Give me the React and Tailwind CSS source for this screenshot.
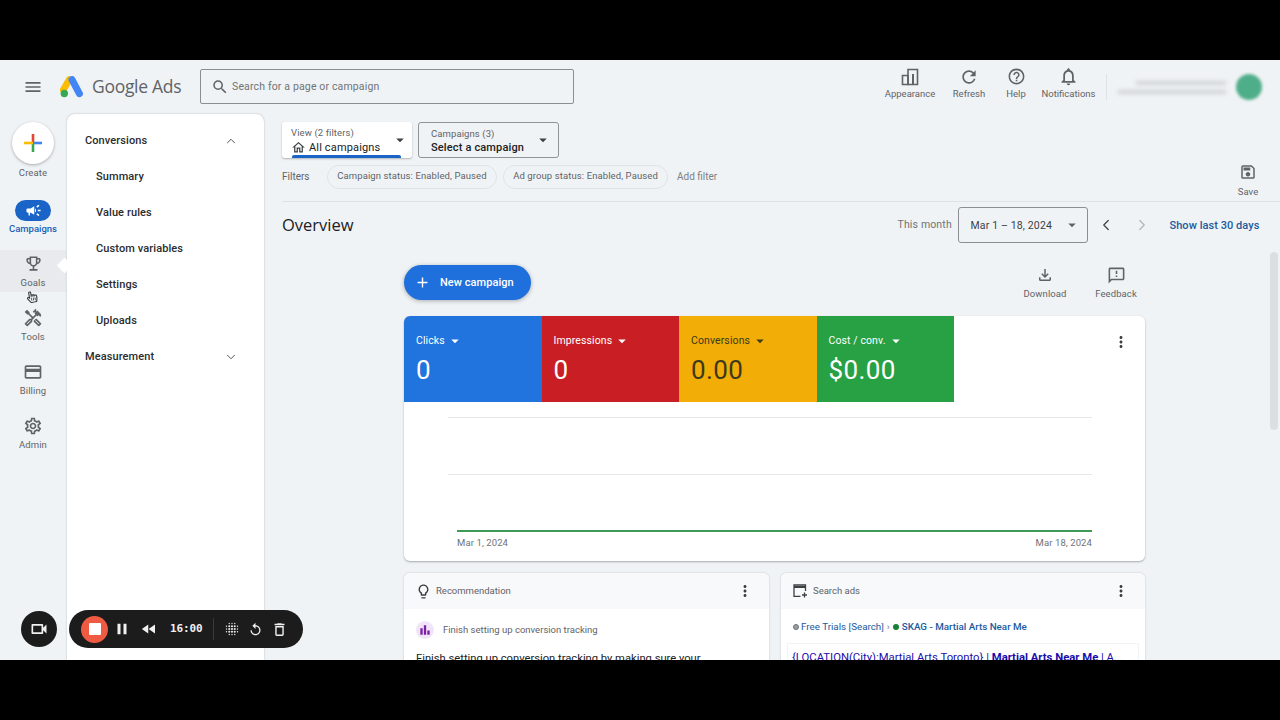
import React from "react";
import {
  MdMenu, MdSearch, MdRefresh, MdHelpOutline, MdNotificationsNone, MdCampaign, MdOutlineEmojiEvents,
  MdOutlineHandyman, MdOutlineCreditCard, MdOutlineSettings, MdArrowDropDown,
  MdOutlineHome, MdOutlineSave, MdAdd, MdOutlineFileDownload, MdOutlineSmsFailed,
  MdMoreVert, MdOutlineLightbulb, MdBarChart, MdOutlineVideocam, MdPause, MdFastRewind, MdReplay, MdOutlineDelete,
} from "react-icons/md";
import { FaRegHandPointer } from "react-icons/fa";
import { ChevronLeft, ChevronRight, ChevronUp, ChevronDown } from "lucide-react";

const AdsLogo = () => (
  <svg width="24" height="22" viewBox="0 0 24 22">
    <path d="M9.300 3.500 L3.200 14" stroke="#fbbc04" strokeWidth="6.600" strokeLinecap="round" />
    <path d="M12 3.600 L19.400 17.600" stroke="#4285f4" strokeWidth="7" strokeLinecap="round" />
    <circle cx="4.300" cy="17.500" r="3.700" fill="#34a853" />
  </svg>
);

const AppearanceIcon = () => (
  <svg width="18" height="18" viewBox="0 0 18 18" fill="none" stroke="#5f6368" strokeWidth="1.600">
    <path d="M1.500 7.500h5.500v9H1.500z" />
    <path d="M7 1.500h9.500v15H7z" />
    <path d="M11 6h2v10.500h-2z" fill="#5f6368" stroke="none" />
  </svg>
);

const ColorPlus = () => (
  <svg width="18" height="18" viewBox="0 0 18 18">
    <path d="M7.700 0h2.600v9H7.700z" fill="#ea4335" />
    <path d="M9 7.700h9v2.600H9z" fill="#4285f4" />
    <path d="M7.700 9h2.600v9H7.700z" fill="#34a853" />
    <path d="M0 7.700h9v2.600H0z" fill="#fbbc04" />
  </svg>
);

const AddWindow = () => (
  <svg width="15" height="14" viewBox="0 0 15 14" fill="none" stroke="#3c4043" strokeWidth="1.300">
    <path d="M7.500 12.400H1V1h11.500v6" />
    <path d="M1 3h11.500" strokeWidth="2" />
    <path d="M11.500 8.500v5M9 11h5" />
  </svg>
);

const GridDots = () => (
  <svg width="14" height="14" viewBox="0 0 14 14" fill="#e8e8e8">
    {[0, 1, 2, 3, 4].flatMap((r) =>
      [0, 1, 2, 3, 4].map((c) => {
        const big = c >= 1 && c <= 3 && r >= 1 && r <= 3;
        const corner = (r === 0 || r === 4) && (c === 0 || c === 4);
        if (corner) return null;
        return <circle key={`${r}-${c}`} cx={1.5 + c * 2.75} cy={1.5 + r * 2.75} r={big ? 1.05 : 0.7} />;
      })
    )}
  </svg>
);

const RailItem = ({ icon, label }) => (
  <div className="h-[54px] w-full flex flex-col items-center pt-[4px]">
    {icon}
    <span className="text-[9.500px] leading-[12px] tracking-[0.1px] text-[#5f6368] mt-[3px]">{label}</span>
  </div>
);

const HeaderAction = ({ icon, label, className }) => (
  <div className={`flex flex-col items-center ${className}`}>
    <div className="h-[20px] flex items-center justify-center">{icon}</div>
    <span className="text-[9.500px] leading-[12px] tracking-[0px] text-[#5f6368] mt-[1px] whitespace-nowrap">{label}</span>
  </div>
);

const Tile = ({ label, value, bg, dark }) => (
  <div className={`w-[137.5px] h-[86px] ${bg} pl-[12px] pt-[17px] ${dark ? "text-[#3c3a1e]" : "text-white"}`}>
    <div className="flex items-center h-[16px]">
      <span className="text-[10.500px] tracking-[0.1px]">{label}</span>
      <MdArrowDropDown size={18} className="ml-[1px]" />
    </div>
    <div className="text-[26px] leading-[28px] mt-[7px] tracking-[0.4px]">{value}</div>
  </div>
);

const Chip = ({ children, className }) => (
  <span className={`h-[24px] flex items-center justify-center rounded-full border border-[#e0e3e6] text-[9.500px] text-[#5f6368] tracking-[0.1px] whitespace-nowrap ${className}`}>{children}</span>
);

export default function App() {
  return (
    <div className="w-[1280px] h-[720px] bg-black py-[60px] overflow-hidden" style={{ fontFamily: "Roboto, 'Liberation Sans', sans-serif" }}>
      <div className="relative h-[600px] bg-[#f0f3f5] overflow-hidden flex flex-col">
        {/* Header */}
        <header className="h-[54px] shrink-0 flex items-center">
          <div className="w-[66px] flex justify-center"><MdMenu size={20} className="text-[#5f6368]" /></div>
          <div className="ml-[-6px] mt-[-1px]"><AdsLogo /></div>
          <span className="ml-[8px] text-[17.500px] text-[#5f6368] w-[108px] mt-[-1px]" style={{ fontFamily: "'Open Sans', sans-serif", letterSpacing: "-0.3px" }}>Google Ads</span>
          <div className="w-[374px] h-[35px] mt-[-1px] border border-[#8a8f94] rounded-[2px] flex items-center pl-[10px]">
            <MdSearch size={18} className="text-[#5f6368]" />
            <span className="ml-[3px] text-[10.500px] tracking-[0.15px] text-[#6f7377]">Search for a page or campaign</span>
          </div>
          <div className="flex items-start ml-[311px] mt-[-8px]">
            <HeaderAction className="w-[50px]" icon={<AppearanceIcon />} label="Appearance" />
            <HeaderAction className="w-[26px] ml-[21px]" icon={<MdRefresh size={20} className="text-[#5f6368]" />} label="Refresh" />
            <HeaderAction className="w-[20px] ml-[24px]" icon={<MdHelpOutline size={19} className="text-[#5f6368]" />} label="Help" />
            <HeaderAction className="w-[55px] ml-[15px]" icon={<MdNotificationsNone size={21} className="text-[#5f6368]" />} label="Notifications" />
          </div>
          <div className="ml-[10px] w-px h-[26px] bg-[#e0e3e6]" />
          <div className="ml-[9px] w-[110px] flex flex-col items-end gap-[5px] blur-[2px]">
            <div className="w-[90px] h-[4px] bg-[#cfd2d4]" />
            <div className="w-[108px] h-[4px] bg-[#cfd2d4]" />
          </div>
          <div className="ml-[10px] w-[26px] h-[26px] rounded-full bg-[#4fae8a] blur-[1.500px]" />
        </header>

        <div className="flex-1 flex min-h-0">
          {/* Rail */}
          <nav className="w-[66px] shrink-0 flex flex-col items-center pt-[8px]">
            <div className="h-[74px] flex flex-col items-center w-full">
              <div className="w-[42px] h-[42px] shrink-0 rounded-full bg-white shadow-[0_1px_3px_rgba(60,64,67,0.4)] flex items-center justify-center"><ColorPlus /></div>
              <span className="text-[9.500px] leading-[12px] tracking-[0.1px] text-[#5f6368] mt-[3px]">Create</span>
            </div>
            <div className="h-[54px] w-full flex flex-col items-center pt-[4px]">
              <div className="w-[36px] h-[21px] rounded-full bg-[#1a63c7] flex items-center justify-center"><MdCampaign size={17} className="text-white" /></div>
              <span className="text-[9.500px] leading-[12px] tracking-[0px] text-[#1a5fb4] font-medium mt-[2px]">Campaigns</span>
            </div>
            <div className="h-[42px] w-full bg-[#e8eaed] flex flex-col items-center pt-[4px] mb-[12px]">
              <MdOutlineEmojiEvents size={19} className="text-[#5f6368]" />
              <span className="text-[9.500px] leading-[12px] tracking-[0.1px] text-[#5f6368] mt-[4px]">Goals</span>
            </div>
            <RailItem icon={<MdOutlineHandyman size={20} className="text-[#5f6368]" />} label="Tools" />
            <RailItem icon={<MdOutlineCreditCard size={20} className="text-[#5f6368]" />} label="Billing" />
            <RailItem icon={<MdOutlineSettings size={20} className="text-[#5f6368]" />} label="Admin" />
          </nav>

          {/* Sub menu */}
          <aside className="ml-[1px] w-[197px] shrink-0 bg-white rounded-t-[8px] shadow-[0_0_2px_rgba(60,64,67,0.35)] pt-[9px] text-[11px] tracking-[0.1px] font-medium text-[#2a2c2f]">
            <div className="h-[36px] flex items-center justify-between pl-[18px] pr-[26px]"><span>Conversions</span><ChevronUp size={14} strokeWidth={1.5} className="text-[#3c4043]" /></div>
            {["Summary", "Value rules", "Custom variables", "Settings", "Uploads"].map((t) => (
              <div key={t} className="h-[36px] flex items-center pl-[29px]">{t}</div>
            ))}
            <div className="h-[36px] flex items-center justify-between pl-[18px] pr-[26px]"><span>Measurement</span><ChevronDown size={14} strokeWidth={1.5} className="text-[#3c4043]" /></div>
          </aside>

          {/* Main */}
          <main className="flex-1 min-w-0 pl-[18px]">
            <div className="flex gap-[6px] pt-[8px]">
              <div className="relative w-[130px] h-[36px] bg-white rounded-[3px] shadow-[0_1px_2px_rgba(60,64,67,0.35)] pl-[9px] pt-[5px] overflow-hidden">
                <div className="text-[9.500px] leading-[11px] text-[#5f6368] tracking-[0.1px]">View (2 filters)</div>
                <div className="flex items-center mt-[2px]">
                  <MdOutlineHome size={15} className="text-[#3c4043]" />
                  <span className="ml-[3px] text-[11px] leading-[14px] tracking-[0.15px] text-[#202124]">All campaigns</span>
                </div>
                <MdArrowDropDown size={18} className="absolute right-[3px] top-[9px] text-[#3c4043]" />
                <div className="absolute left-[10px] bottom-0 w-[109px] h-[3px] bg-[#1a63c7] rounded-t-[2px]" />
              </div>
              <div className="relative w-[141px] h-[36px] border border-[#8f9498] rounded-[3px] pl-[12px] pt-[5px]">
                <div className="text-[9.500px] leading-[11px] text-[#5f6368] tracking-[0.1px]">Campaigns (3)</div>
                <div className="text-[11px] leading-[14px] mt-[2px] tracking-[0.15px] font-medium text-[#202124]">Select a campaign</div>
                <MdArrowDropDown size={18} className="absolute right-[6px] top-[8px] text-[#3c4043]" />
              </div>
            </div>

            <div className="relative flex items-center h-[44px] border-b border-[#dfe2e5]">
              <div className="flex items-center mt-[-6px]">
                <span className="text-[10px] text-[#5f6368] w-[45px]">Filters</span>
                <Chip className="w-[170px]">Campaign status: Enabled, Paused</Chip>
                <Chip className="w-[165px] ml-[6px]">Ad group status: Enabled, Paused</Chip>
                <span className="ml-[9px] text-[10px] text-[#7d8185]">Add filter</span>
              </div>
              <div className="absolute left-[953px] top-[5px] flex flex-col items-center w-[26px]">
                <MdOutlineSave size={18} className="text-[#5f6368]" />
                <span className="text-[9.500px] leading-[12px] mt-[5px] tracking-[0.1px] text-[#5f6368]">Save</span>
              </div>
            </div>

            <div className="flex items-center h-[36px] mt-[5px]">
              <span className="text-[16.500px] text-[#202124] w-[615.500px]" style={{ fontFamily: "'Open Sans', sans-serif" }}>Overview</span>
              <span className="text-[10.500px] text-[#6f7377] tracking-[0.15px] w-[60px]">This month</span>
              <div className="w-[130px] h-[36px] border border-[#8a8f94] rounded-[3px] flex items-center justify-between pl-[12px] pr-[6px]">
                <span className="mt-[1px] text-[10.500px] tracking-[0.15px] text-[#3c4043]">Mar 1 – 18, 2024</span>
                <MdArrowDropDown size={18} className="text-[#5f6368]" />
              </div>
              <ChevronLeft size={18} strokeWidth={1.6} className="text-[#3c4043] ml-[9px]" />
              <ChevronRight size={18} strokeWidth={1.6} className="text-[#b0b3b7] ml-[18px]" />
              <span className="ml-[19px] mt-[2px] text-[11px] font-medium text-[#1c5a9f] tracking-[0.05px] whitespace-nowrap">Show last 30 days</span>
            </div>

            <div className="ml-[122px] w-[741px]">
              <div className="flex items-start justify-between h-[73px] pt-[22px]">
                <div className="w-[127px] h-[35px] rounded-full bg-[#1f6fdc] shadow-[0_1px_4px_rgba(60,64,67,0.4)] flex items-center pl-[10px] text-white">
                  <MdAdd size={17} />
                  <span className="ml-[9px] mt-[1px] text-[11px] font-medium tracking-[0.05px]">New campaign</span>
                </div>
                <div className="flex items-start mt-[1px]">
                  <div className="flex flex-col items-center w-[44px]">
                    <MdOutlineFileDownload size={18} className="text-[#5f6368]" />
                    <span className="text-[9.500px] leading-[12px] tracking-[0.1px] text-[#5f6368] mt-[4px]">Download</span>
                  </div>
                  <div className="flex flex-col items-center w-[44px] ml-[27px] mr-[7px]">
                    <MdOutlineSmsFailed size={19} className="text-[#5f6368]" />
                    <span className="text-[9.500px] leading-[12px] tracking-[0.1px] text-[#5f6368] mt-[3px]">Feedback</span>
                  </div>
                </div>
              </div>

              <section className="relative h-[245px] bg-white rounded-[6px] overflow-hidden shadow-[0_1px_2px_rgba(60,64,67,0.4)]">
                <div className="flex">
                  <Tile label="Clicks" value="0" bg="bg-[#2173de]" />
                  <Tile label="Impressions" value="0" bg="bg-[#c91f24]" />
                  <Tile label="Conversions" value="0.00" bg="bg-[#f2ad06]" dark />
                  <Tile label="Cost / conv." value="$0.00" bg="bg-[#28a144]" />
                </div>
                <MdMoreVert size={18} className="absolute right-[15px] top-[17px] text-[#3c4043]" />
                <div className="ml-[44px] w-[644px] pt-[15px]">
                  <div className="h-[57px] border-t border-[#e6e8ea]" />
                  <div className="h-[56px] border-t border-[#e6e8ea]" />
                  <div className="ml-[9px] h-[2px] bg-[#3f9a55]" />
                  <div className="ml-[9px] mt-[4px] flex justify-between text-[9.500px] tracking-[0.1px] text-[#6f7377]">
                    <span>Mar 1, 2024</span><span>Mar 18, 2024</span>
                  </div>
                </div>
              </section>

              <div className="flex gap-[12px] mt-[12px]">
                <section className="w-[365px] h-[120px] bg-white rounded-t-[6px] shadow-[0_0_2px_rgba(60,64,67,0.3)] overflow-hidden">
                  <div className="h-[36px] bg-[#f8f9fa] flex items-center pl-[11px] pr-[15px]">
                    <MdOutlineLightbulb size={17} className="text-[#3c4043]" />
                    <span className="ml-[4px] text-[9.500px] tracking-[0px] text-[#5f6368]">Recommendation</span>
                    <MdMoreVert size={18} className="ml-auto text-[#3c4043]" />
                  </div>
                  <div className="flex items-center pl-[12px] mt-[12px]">
                    <div className="w-[18px] h-[18px] rounded-full bg-[#f1e4f8] flex items-center justify-center"><MdBarChart size={14} className="text-[#7b1fa2]" /></div>
                    <span className="ml-[9px] text-[9.500px] tracking-[0px] text-[#5f6368]">Finish setting up conversion tracking</span>
                  </div>
                  <div className="pl-[12px] mt-[12px] text-[11.200px] text-[#202124] whitespace-nowrap">Finish setting up conversion tracking by making sure your</div>
                </section>
                <section className="w-[364px] h-[120px] bg-white rounded-t-[6px] shadow-[0_0_2px_rgba(60,64,67,0.3)] overflow-hidden">
                  <div className="h-[36px] bg-[#f8f9fa] flex items-center pl-[12px] pr-[15px]">
                    <AddWindow />
                    <span className="ml-[5px] text-[9.500px] tracking-[0px] text-[#5f6368]">Search ads</span>
                    <MdMoreVert size={18} className="ml-auto text-[#3c4043]" />
                  </div>
                  <div className="flex items-center pl-[12px] mt-[11px] text-[9.800px] text-[#1c5a9f] whitespace-nowrap">
                    <span className="w-[6px] h-[6px] rounded-full border-[1.500px] border-[#6f7377] bg-[#9a9ea2]" />
                    <span className="ml-[2px]">Free Trials [Search]</span>
                    <span className="mx-[3px] text-[#6f7377]">›</span>
                    <span className="w-[6px] h-[6px] rounded-full bg-[#188038]" />
                    <span className="ml-[3px] font-medium">SKAG - Martial Arts Near Me</span>
                  </div>
                  <div className="mx-[6px] mt-[8px] pl-[4px] pt-[6px] border border-[#f1f3f4] text-[11.300px] text-[#1a0dab] whitespace-nowrap overflow-hidden">
                    {"{LOCATION(City):Martial Arts Toronto}"} | <b className="text-[#1a0dab]">Martial Arts Near Me</b> | A...
                  </div>
                </section>
              </div>
            </div>
          </main>
        </div>

        {/* Scrollbar */}
        <div className="absolute right-[2px] top-[192px] w-[8px] h-[178px] bg-[#dcdfe1] rounded-full" />

        {/* Goals notch */}
        <div className="absolute left-[59px] top-[200px] w-[11px] h-[11px] bg-white rotate-45" />

        {/* Cursor */}
        <FaRegHandPointer size={12} className="absolute left-[26px] top-[231px] text-[#3c4043] rotate-[-10deg]" />

        {/* Recording controls */}
        <div className="absolute left-[21px] top-[551px] w-[36px] h-[36px] rounded-full bg-[#1c1c1c] flex items-center justify-center">
          <MdOutlineVideocam size={20} className="text-[#f0f0f0]" />
        </div>
        <div className="absolute left-[69px] top-[550px] w-[234px] h-[38px] rounded-full bg-[#1c1c1c] flex items-center pl-[12px] text-[#f0f0f0]">
          <div className="w-[27px] h-[27px] rounded-full bg-[#ef5a42] flex items-center justify-center"><div className="w-[12px] h-[12px] rounded-[1px] bg-white" /></div>
          <MdPause size={18} className="ml-[5px]" />
          <MdFastRewind size={18} className="ml-[9px]" />
          <span className="ml-[12px] text-[11px] font-bold w-[32px]" style={{ fontFamily: "'DejaVu Sans Mono', monospace", letterSpacing: "-0.1px" }}>16:00</span>
          <div className="ml-[11px] w-px h-[22px] bg-[#3a3a3a]" />
          <div className="ml-[11px]"><GridDots /></div>
          <MdReplay size={15} className="ml-[9px]" />
          <MdOutlineDelete size={17} className="ml-[8px]" />
        </div>
      </div>
    </div>
  );
}
